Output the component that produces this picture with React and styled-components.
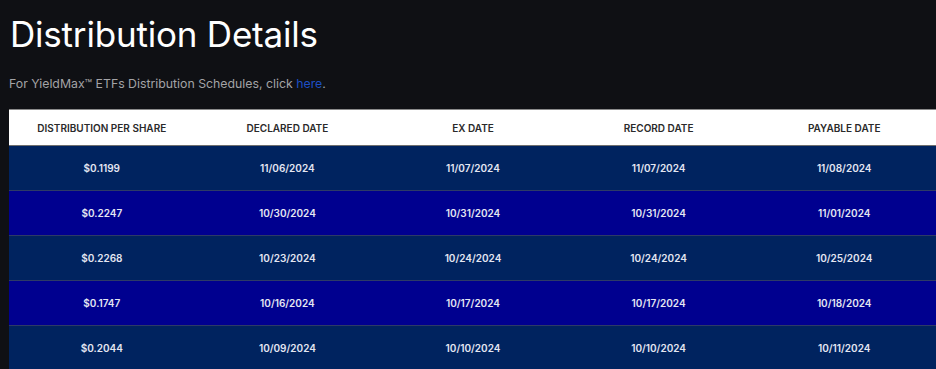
import React from "react";
import styled, { createGlobalStyle } from "styled-components";

const rows = [
    ["$0.1199", "11/06/2024", "11/07/2024", "11/07/2024", "11/08/2024"],
    ["$0.2247", "10/30/2024", "10/31/2024", "10/31/2024", "11/01/2024"],
    ["$0.2268", "10/23/2024", "10/24/2024", "10/24/2024", "10/25/2024"],
    ["$0.1747", "10/16/2024", "10/17/2024", "10/17/2024", "10/18/2024"],
    ["$0.2044", "10/09/2024", "10/10/2024", "10/10/2024", "10/11/2024"],
];

const heads = ["Distribution per share", "Declared date", "Ex date", "Record date", "Payable date"];

const App = () => {
    return (
        <>
            <Global />
            <Page>
                <Title>Distribution Details</Title>
                <Note>
                    For YieldMax™ ETFs Distribution Schedules, click <Link href="#">here</Link>.
                </Note>
                <Table>
                    <thead>
                        <tr>
                            {heads.map((h) => (
                                <Th key={h}>{h}</Th>
                            ))}
                        </tr>
                    </thead>
                    <tbody>
                        {rows.map((r, i) => (
                            <Row key={i} $alt={i % 2 === 1}>
                                {r.map((c, j) => (
                                    <Td key={j}>{c}</Td>
                                ))}
                            </Row>
                        ))}
                    </tbody>
                </Table>
            </Page>
        </>
    );
};

export default App;

const Global = createGlobalStyle`
    body {
        margin: 0;
        background: #0f1014;
        font-family: Inter, "Liberation Sans", sans-serif;
        overflow: hidden;
    }
`;

const Page = styled.div`
    padding: 11px 0 0 9px;
    width: 936px;
    box-sizing: border-box;
`;

const Title = styled.h1`
    margin: 0 0 0 1px;
    font-size: 35px;
    font-weight: 400;
    color: #ffffff;
    line-height: 46px;
    letter-spacing: -0.2px;
`;

const Note = styled.p`
    margin: 18px 0 16px 0;
    font-size: 12.3px;
    color: #a3a3a6;
    line-height: 18px;
`;

const Link = styled.a`
    color: #1d4fc4;
    text-decoration: none;
`;

const Table = styled.table`
    width: 928px;
    border-collapse: collapse;
    table-layout: fixed;
`;

const Th = styled.th`
    background: #ffffff;
    color: #2a2a2a;
    font-size: 10px;
    font-weight: 600;
    text-transform: uppercase;
    height: 35px;
    padding: 0;
    border-top: 1px solid #8a8a8a;
    border-bottom: 1px solid #6e6e6e;
`;

const Row = styled.tr`
    background: ${(p) => (p.$alt ? "#00008f" : "#00235f")};
    border-top: 1px solid #2d3a66;
`;

const Td = styled.td`
    height: 44px;
    padding: 0;
    text-align: center;
    color: #e4e6f2;
    font-size: 10px;
    font-weight: 600;
`;
